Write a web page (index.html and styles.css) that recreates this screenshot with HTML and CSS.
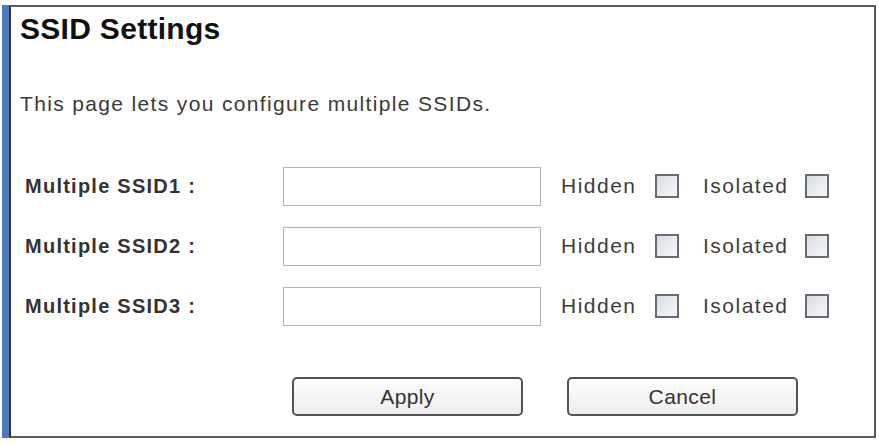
FILE: index.html
```html
<!DOCTYPE html>
<html lang="en">
<head>
<meta charset="utf-8">
<title>SSID Settings</title>
<link rel="stylesheet" href="styles.css">
</head>
<body>
<div class="frame">
  <form class="panel">
    <h1 class="title">SSID Settings</h1>
    <p class="intro">This page lets you configure multiple SSIDs.</p>

    <div class="rows">
      <div class="row">
        <label class="name" for="ssid1">Multiple SSID1 :</label>
        <input class="field" type="text" id="ssid1">
        <span class="opt">Hidden</span><input class="box" type="checkbox">
        <span class="opt opt-iso">Isolated</span><input class="box" type="checkbox">
      </div>
      <div class="row">
        <label class="name" for="ssid2">Multiple SSID2 :</label>
        <input class="field" type="text" id="ssid2">
        <span class="opt">Hidden</span><input class="box" type="checkbox">
        <span class="opt opt-iso">Isolated</span><input class="box" type="checkbox">
      </div>
      <div class="row">
        <label class="name" for="ssid3">Multiple SSID3 :</label>
        <input class="field" type="text" id="ssid3">
        <span class="opt">Hidden</span><input class="box" type="checkbox">
        <span class="opt opt-iso">Isolated</span><input class="box" type="checkbox">
      </div>
    </div>

    <div class="actions">
      <button class="btn" type="button">Apply</button>
      <button class="btn" type="button">Cancel</button>
    </div>
  </form>
</div>
</body>
</html>
```

FILE: styles.css
```css
html, body {
  margin: 0;
  padding: 0;
  background: #ffffff;
}

body {
  font-family: "Liberation Sans", Arial, sans-serif;
  color: #333;
}

/* outer window: blue stripe on the left */
.frame {
  margin: 5px 3px 0 2px;
  border-left: 7px solid #4f78bd;
  height: 433px;
  box-sizing: border-box;
}

.panel {
  height: 100%;
  box-sizing: border-box;
  border: 2px solid #5b5b5b;
  border-left-color: #333;
  padding: 6px 0 0 9px;
  display: flex;
  flex-direction: column;
}

.title {
  margin: 0;
  font-size: 30px;
  line-height: 32px;
  font-weight: bold;
  letter-spacing: 0.3px;
  color: #111;
}

.intro {
  margin: 47px 0 0 0;
  font-size: 21px;
  line-height: 24px;
  letter-spacing: 1.35px;
  color: #3a3a3a;
}

.rows {
  margin-top: 50px;
  padding-left: 5px;
  display: flex;
  flex-direction: column;
  gap: 20px;
}

.row {
  display: flex;
  align-items: center;
  height: 40px;
}

.name {
  width: 258px;
  font-size: 20px;
  font-weight: bold;
  letter-spacing: 1.25px;
  color: #333;
}

.field {
  width: 258px;
  height: 39px;
  box-sizing: border-box;
  margin: 0;
  border: 1px solid #b4b4b4;
  background: #fff;
}

.opt {
  margin-left: 20px;
  width: 77px;
  font-size: 21px;
  letter-spacing: 1.5px;
  color: #3d3d3d;
}

.opt.opt-iso {
  margin-left: 24px;
  width: 85px;
}

.box {
  appearance: none;
  -webkit-appearance: none;
  margin: 0 0 0 17px;
  width: 24px;
  height: 24px;
  box-sizing: border-box;
  border: 2px solid #686c72;
  background: linear-gradient(135deg, #d9dde3, #f7f8fa);
}

.actions {
  margin-top: 51px;
  padding-left: 272px;
  display: flex;
  gap: 44px;
}

.btn {
  width: 231px;
  height: 39px;
  box-sizing: border-box;
  border: 2px solid #4f5458;
  border-radius: 5px;
  background: linear-gradient(#fdfdfd, #eeeeee);
  font-family: "Liberation Sans", Arial, sans-serif;
  font-size: 21px;
  letter-spacing: 0.4px;
  color: #333;
  padding: 0;
}
```
